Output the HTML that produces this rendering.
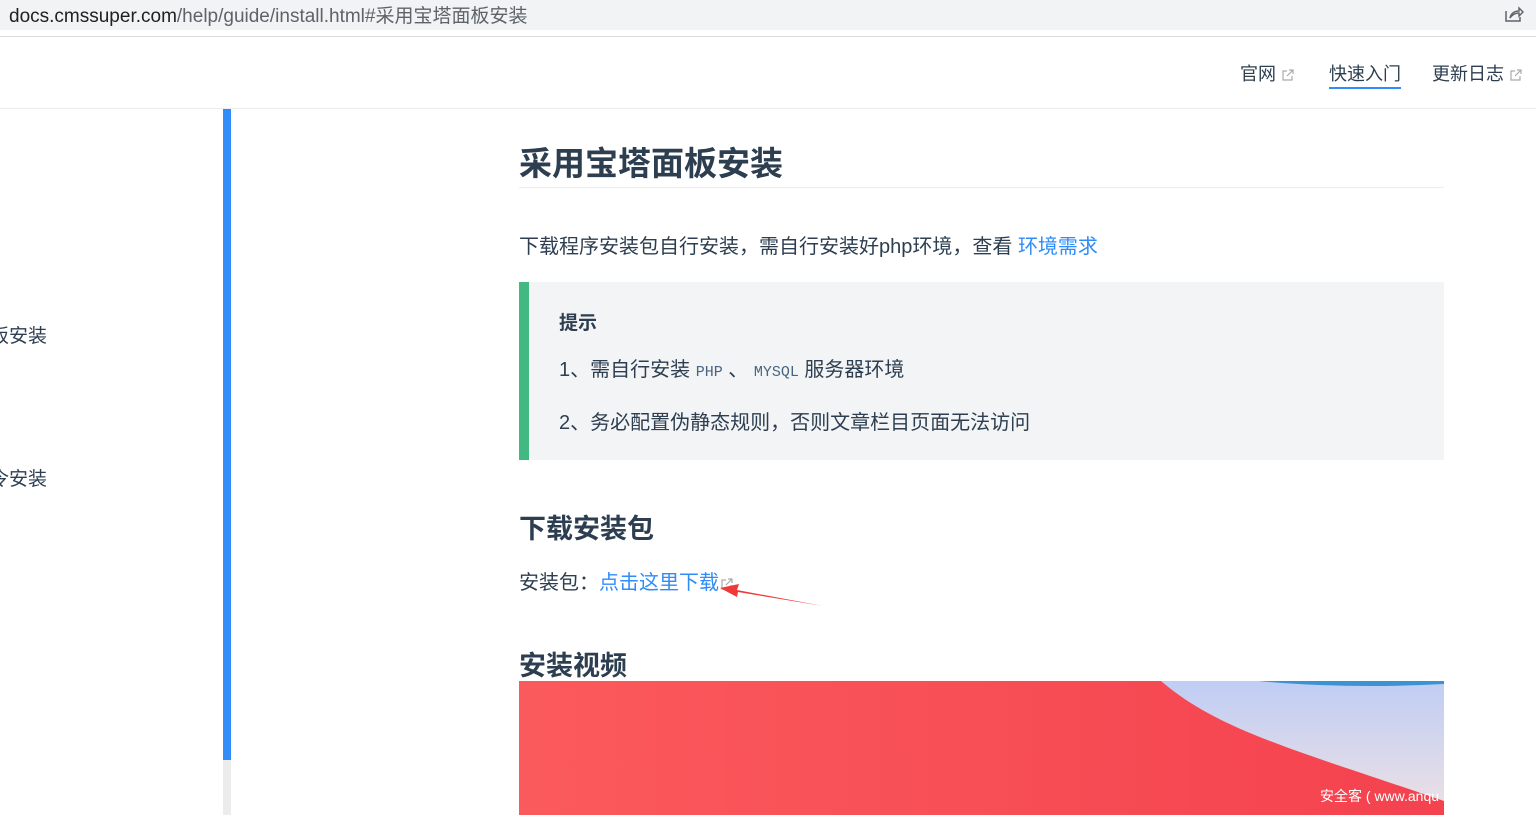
<!DOCTYPE html>
<html><head><meta charset="utf-8"><style>
*{margin:0;padding:0;box-sizing:border-box}
body{width:1536px;height:815px;overflow:hidden;background:#fff;font-family:"Liberation Sans","Noto Sans CJK SC",sans-serif;color:#2c3e50;position:relative}
.a{position:absolute;white-space:nowrap}
.url{left:0;top:0;width:1536px;height:31px;background:#f1f3f4;border-bottom:1px solid #fff}
.ext{display:inline-block;vertical-align:middle;margin-left:6px}
code{font-family:'Liberation Mono',monospace;font-size:15px;color:#476582}
</style></head><body>
<div class="a url"></div>
<div class="a" style="left:9px;top:1px;font-size:19px;color:#202124">docs.cmssuper.com<span style="color:#5f6368">/help/guide/install.html#采用宝塔面板安装</span></div>
<svg class="a" style="left:1504px;top:5px" width="20" height="18" viewBox="0 0 20 18"><path d="M2 6v10h14v-4" fill="none" stroke="#5f6368" stroke-width="1.5"/><path d="M6 13c1-5 5-7 9-7V3l4 4-4 4V8c-4 0-7 2-9 5z" fill="none" stroke="#5f6368" stroke-width="1.4"/></svg>
<div class="a" style="left:0;top:36px;width:1536px;height:1px;background:#dcdcdc"></div>
<div class="a" style="left:0;top:108px;width:1536px;height:1px;background:#eaecef"></div>
<div class="a" style="left:1240px;top:60px;font-size:18px">官网<svg class="ext" width="12" height="12" viewBox="0 0 12 12"><path d="M5 2H1v9h9V7M7 1h4v4M11 1L5 7" fill="none" stroke="#aaa" stroke-width="1.2"/></svg></div>
<div class="a" style="left:1329px;top:60px;font-size:18px">快速入门</div>
<div class="a" style="left:1329px;top:87px;width:72px;height:2px;background:#2f8cf8"></div>
<div class="a" style="left:1432px;top:60px;font-size:18px">更新日志<svg class="ext" width="12" height="12" viewBox="0 0 12 12"><path d="M5 2H1v9h9V7M7 1h4v4M11 1L5 7" fill="none" stroke="#aaa" stroke-width="1.2"/></svg></div>
<div class="a" style="left:223px;top:109px;width:8px;height:651px;background:#2f8cf8"></div>
<div class="a" style="left:223px;top:760px;width:8px;height:55px;background:#ececec"></div>
<div class="a" style="left:-10px;top:321px;font-size:19px">板安装</div>
<div class="a" style="left:-4px;top:357px;font-size:18px">,</div>
<div class="a" style="left:-10px;top:464px;font-size:19px">令安装</div>
<div class="a" style="left:519px;top:137px;font-size:33px;font-weight:bold">采用宝塔面板安装</div>
<div class="a" style="left:519px;top:187px;width:925px;height:1px;background:#eaecef"></div>
<div class="a" style="left:519px;top:230px;font-size:20px">下载程序安装包自行安装，需自行安装好php环境，查看 <span style="color:#2f8cf8">环境需求</span></div>
<div class="a" style="left:519px;top:282px;width:925px;height:178px;background:#f3f4f5;border-left:10px solid #42b983"></div>
<div class="a" style="left:559px;top:308px;font-size:19px;font-weight:bold">提示</div>
<div class="a" style="left:559px;top:353px;font-size:20px">1、需自行安装 <code>PHP</code> 、 <code>MYSQL</code> 服务器环境</div>
<div class="a" style="left:559px;top:406px;font-size:20px">2、务必配置伪静态规则，否则文章栏目页面无法访问</div>
<div class="a" style="left:519px;top:507px;font-size:27px;font-weight:bold">下载安装包</div>
<div class="a" style="left:519px;top:566px;font-size:20px">安装包：<span style="color:#2f8cf8">点击这里下载</span><svg class="ext" style="margin-left:2px" width="12" height="12" viewBox="0 0 12 12"><path d="M5 2H1v9h9V7M7 1h4v4M11 1L5 7" fill="none" stroke="#aaa" stroke-width="1.2"/></svg></div>
<svg class="a" style="left:715px;top:578px" width="115" height="32" viewBox="0 0 115 32"><path d="M108 28L22 12l2-6L5 10l17 9 1-5z" fill="#ef3a37"/></svg>
<div class="a" style="left:519px;top:644px;font-size:27px;font-weight:bold">安装视频</div>
<svg class="a" style="left:519px;top:681px" width="925" height="134" viewBox="0 0 925 134">
<defs><linearGradient id="r" x1="0" x2="1"><stop offset="0" stop-color="#fb5a5c"/><stop offset="1" stop-color="#f4424f"/></linearGradient>
<linearGradient id="b" x1="0" y1="0" x2="0" y2="1"><stop offset="0" stop-color="#bfcdf4"/><stop offset="1" stop-color="#e9dfe6"/></linearGradient></defs>
<rect width="925" height="134" fill="url(#r)"/>
<path d="M642 0C700 50 780 70 925 120V0z" fill="url(#b)"/>
<path d="M740 0C800 6 870 6 925 3V0z" fill="#3a93d2"/>
<text x="801" y="120" font-size="14" fill="#fff" font-family="Liberation Sans,Noto Sans CJK SC,sans-serif">安全客 ( www.anqu</text>
</svg>
</body></html>
